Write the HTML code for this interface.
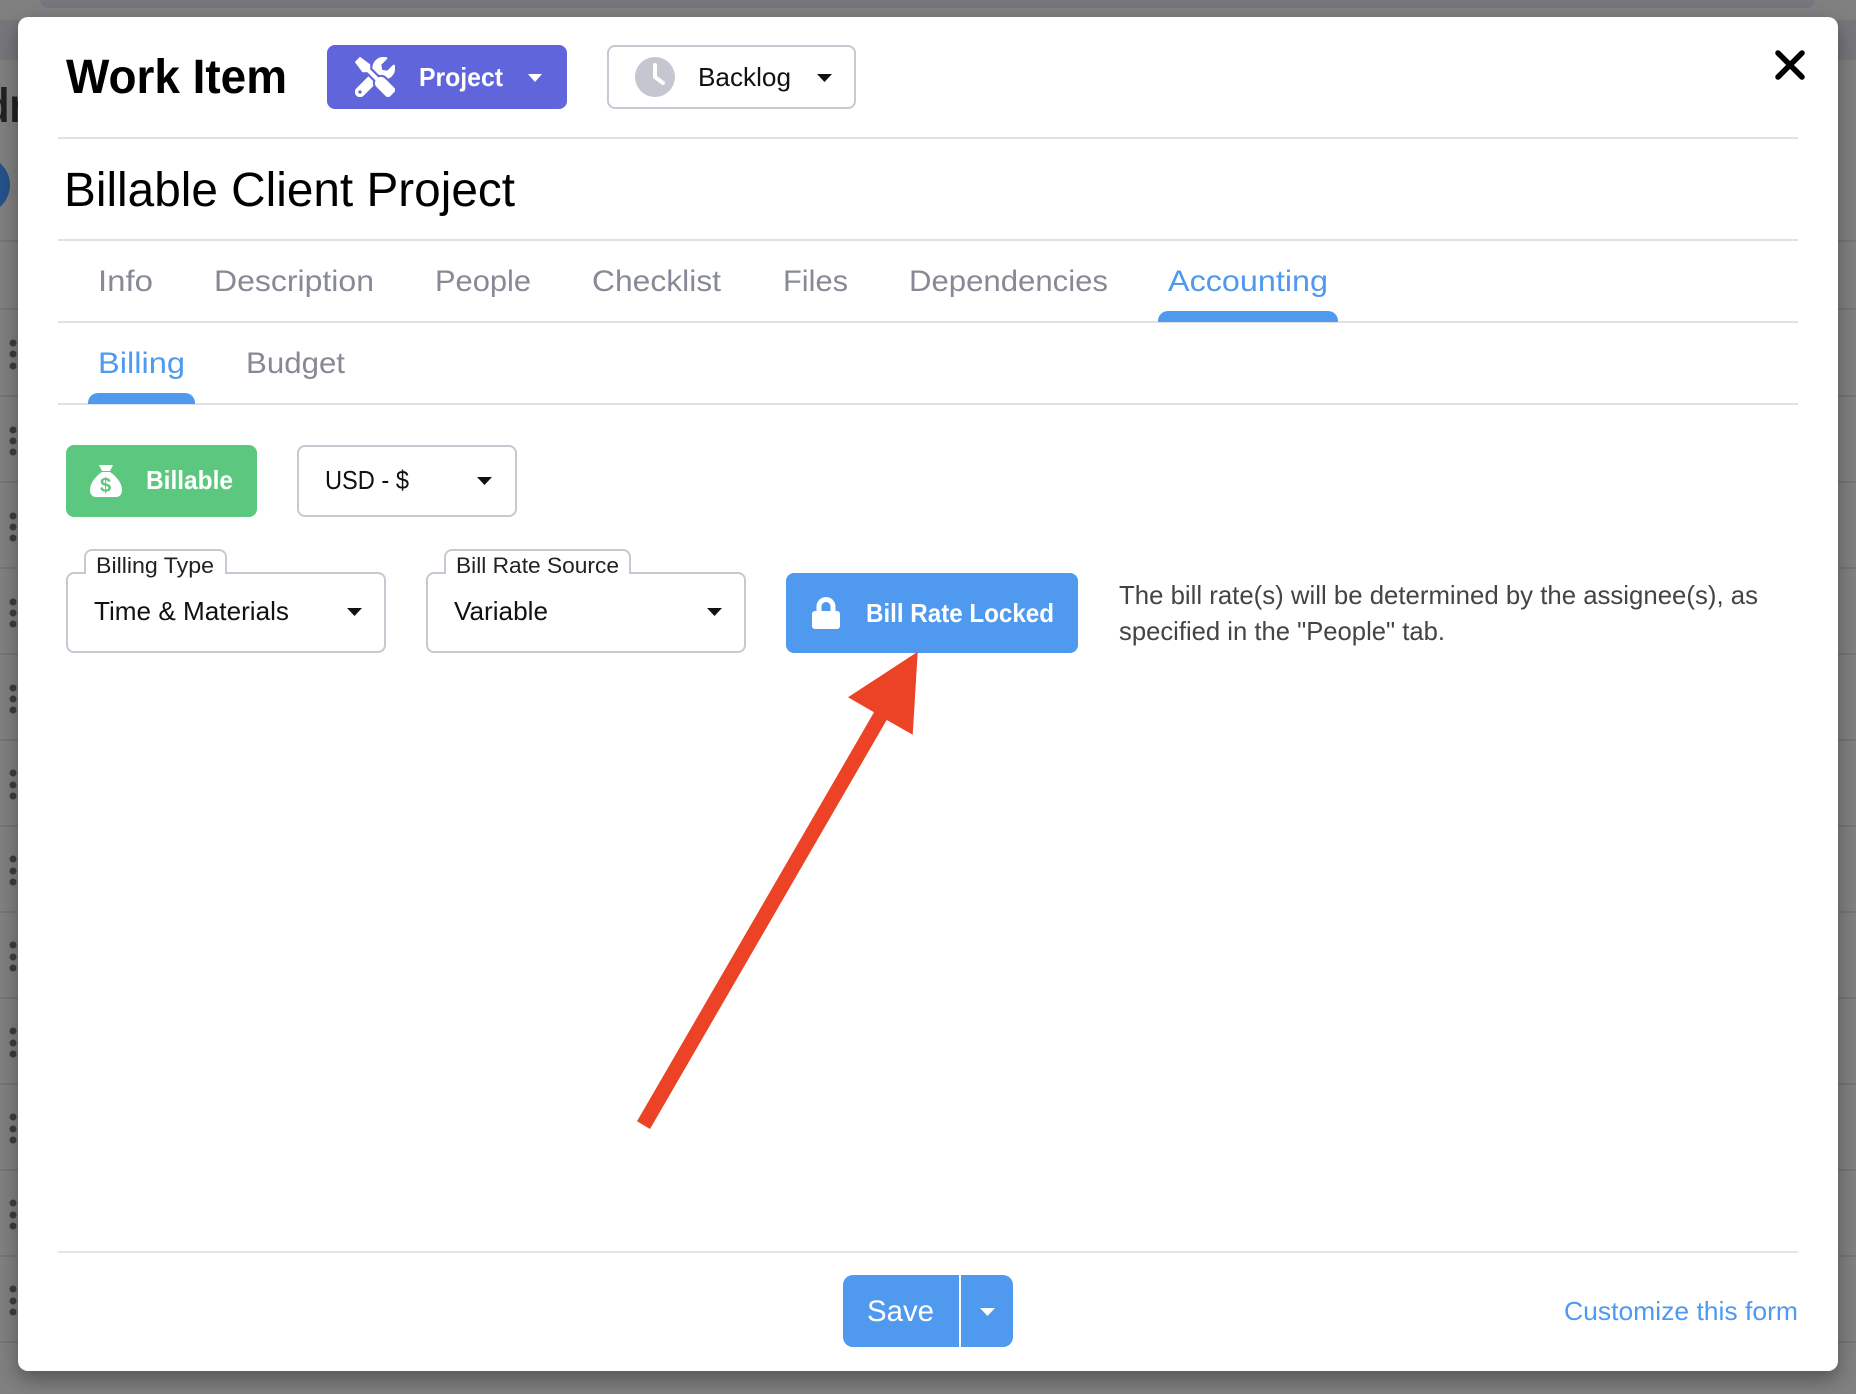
<!DOCTYPE html>
<html lang="en">
<head>
<meta charset="utf-8">
<title>Work Item</title>
<style>
html,body{margin:0;padding:0;width:1856px;height:1394px;overflow:hidden;background:#808080}
body{position:relative;font-family:"Liberation Sans",Arial,sans-serif}
div{position:absolute;box-sizing:border-box}
.bgl{left:0;width:1856px;height:2px;background:#74747a}
.ln{left:58px;width:1740px;height:2px;background:#dfe1e8}
.sel{background:#fff;border:2px solid #c8c8d2;border-radius:8px}
.btn{border-radius:8px}
.lab{background:#fff;border:2px solid #c8c8d2;border-bottom:0;border-radius:8px 8px 0 0}
.ind{background:#4f9aee;border-radius:10px 10px 0 0}
svg{position:absolute;left:0;top:0}
text{font-family:"Liberation Sans",Arial,sans-serif}
.tab{font-size:30px;fill:#878a96}
.tabA{font-size:30px;fill:#4f9aee}
.b{font-weight:bold;fill:#fff;font-size:26px}
.v{font-size:26px;fill:#111}
.l{font-size:22px;fill:#222}
.p{font-size:26px;fill:#444}
</style>
</head>
<body>
<!-- background page -->
<div style="left:40px;top:0;width:1775px;height:8px;background:#76767e;border-radius:0 0 12px 12px"></div>
<div style="left:0;top:20px;width:1856px;height:40px;background:#76767c"></div>
<div class="bgl" style="top:240px"></div>
<div class="bgl" style="top:308px"></div>
<div class="bgl" style="top:395px"></div>
<div class="bgl" style="top:481px"></div>
<div class="bgl" style="top:567px"></div>
<div class="bgl" style="top:653px"></div>
<div class="bgl" style="top:739px"></div>
<div class="bgl" style="top:825px"></div>
<div class="bgl" style="top:911px"></div>
<div class="bgl" style="top:997px"></div>
<div class="bgl" style="top:1083px"></div>
<div class="bgl" style="top:1169px"></div>
<div class="bgl" style="top:1255px"></div>
<div class="bgl" style="top:1341px"></div>
<div style="left:-48px;top:156px;width:58px;height:58px;border-radius:50%;background:#26528a"></div>
<svg width="1856" height="1394" viewBox="0 0 1856 1394">
  <text x="-15" y="122" font-size="48" font-weight="bold" fill="#222" textLength="40" lengthAdjust="spacingAndGlyphs">dr</text>
  <g fill="#3e3e3e">
    <circle cx="13" cy="343" r="3.5"/><circle cx="13" cy="354" r="3.5"/><circle cx="13" cy="366" r="3.5"/>
    <circle cx="13" cy="430" r="3.5"/><circle cx="13" cy="441" r="3.5"/><circle cx="13" cy="452" r="3.5"/>
    <circle cx="13" cy="516" r="3.5"/><circle cx="13" cy="527" r="3.5"/><circle cx="13" cy="538" r="3.5"/>
    <circle cx="13" cy="602" r="3.5"/><circle cx="13" cy="613" r="3.5"/><circle cx="13" cy="624" r="3.5"/>
    <circle cx="13" cy="688" r="3.5"/><circle cx="13" cy="699" r="3.5"/><circle cx="13" cy="710" r="3.5"/>
    <circle cx="13" cy="773" r="3.5"/><circle cx="13" cy="785" r="3.5"/><circle cx="13" cy="796" r="3.5"/>
    <circle cx="13" cy="859" r="3.5"/><circle cx="13" cy="871" r="3.5"/><circle cx="13" cy="882" r="3.5"/>
    <circle cx="13" cy="945" r="3.5"/><circle cx="13" cy="957" r="3.5"/><circle cx="13" cy="968" r="3.5"/>
    <circle cx="13" cy="1031" r="3.5"/><circle cx="13" cy="1043" r="3.5"/><circle cx="13" cy="1054" r="3.5"/>
    <circle cx="13" cy="1117" r="3.5"/><circle cx="13" cy="1129" r="3.5"/><circle cx="13" cy="1140" r="3.5"/>
    <circle cx="13" cy="1203" r="3.5"/><circle cx="13" cy="1215" r="3.5"/><circle cx="13" cy="1226" r="3.5"/>
    <circle cx="13" cy="1289" r="3.5"/><circle cx="13" cy="1301" r="3.5"/><circle cx="13" cy="1312" r="3.5"/>
  </g>
</svg>

<!-- modal -->
<div style="left:18px;top:17px;width:1820px;height:1354px;background:#fff;border-radius:10px;box-shadow:0 8px 20px rgba(0,0,0,.35)"></div>
<div class="ln" style="top:137px"></div>
<div class="ln" style="top:239px"></div>
<div class="ln" style="top:321px"></div>
<div class="ln" style="top:403px"></div>
<div class="ln" style="top:1251px;background:#e2e6ea"></div>

<div class="btn" style="left:327px;top:45px;width:240px;height:64px;background:#6065db"></div>
<div class="sel" style="left:607px;top:45px;width:249px;height:64px"></div>
<div class="ind" style="left:1158px;top:311px;width:180px;height:11px"></div>
<div class="ind" style="left:88px;top:393px;width:107px;height:11px"></div>

<div class="btn" style="left:66px;top:445px;width:191px;height:72px;background:#5cc87f"></div>
<div class="sel" style="left:297px;top:445px;width:220px;height:72px"></div>

<div class="sel" style="left:66px;top:572px;width:320px;height:81px"></div>
<div class="lab" style="left:84px;top:549px;width:143px;height:25px"></div>
<div class="sel" style="left:426px;top:572px;width:320px;height:81px"></div>
<div class="lab" style="left:444px;top:549px;width:187px;height:25px"></div>

<div class="btn" style="left:786px;top:573px;width:292px;height:80px;background:#4f9aee"></div>

<div style="left:843px;top:1275px;width:170px;height:72px;background:#4f9aee;border-radius:10px"></div>
<div style="left:959px;top:1275px;width:2px;height:72px;background:#fff"></div>

<svg width="1856" height="1394" viewBox="0 0 1856 1394">
  <text x="66" y="93" font-size="48" font-weight="bold" fill="#000" textLength="221" lengthAdjust="spacingAndGlyphs">Work Item</text>

  <svg x="355" y="57" width="40" height="40" viewBox="0 0 512 512"><path fill="#fff" stroke="#fff" stroke-width="6" stroke-linejoin="round" d="M501.1 395.7L384 278.6c-23.1-23.1-57.6-27.6-85.4-13.9L192 158.1V96L64 0 0 64l96 128h62.1l106.6 106.6c-13.6 27.8-9.2 62.3 13.9 85.4l117.1 117.1c14.6 14.6 38.2 14.6 52.7 0l52.7-52.7c14.5-14.6 14.5-38.2 0-52.7zM331.7 225c28.3 0 54.9 11 74.9 31l19.4 19.4c15.8-6.9 30.8-16.5 43.8-29.5 37.1-37.1 49.7-89.3 37.9-136.7-2.2-9-13.5-12.1-20.1-5.5l-74.4 74.4-67.9-11.3L334 98.9l74.4-74.4c6.6-6.6 3.4-17.9-5.7-20.2-47.4-11.7-99.6.9-136.6 37.9-28.5 28.5-41.9 66.1-41.2 103.6l82.1 82.1c8.1-1.9 16.5-2.9 24.7-2.9zm-103.9 82l-56.7-56.7L18.7 402.8c-25 25-25 65.5 0 90.5s65.5 25 90.5 0l123.6-123.6c-7.6-19.9-9.9-41.6-5-62.7zM64 472c-13.2 0-24-10.8-24-24 0-13.3 10.7-24 24-24s24 10.7 24 24c0 13.2-10.7 24-24 24z"/></svg>
  <text class="b" x="419" y="86" textLength="84" lengthAdjust="spacingAndGlyphs">Project</text>
  <polygon fill="#fff" points="528,74 542,74 535,82"/>

  <circle cx="655" cy="77" r="20" fill="#c5c6d0"/>
  <path d="M655 65V77L663 83" fill="none" stroke="#fff" stroke-width="4" stroke-linecap="round" stroke-linejoin="round"/>
  <text class="v" x="698" y="86" textLength="93" lengthAdjust="spacingAndGlyphs">Backlog</text>
  <polygon fill="#111" points="817,74 832,74 824.5,82"/>

  <path d="M1778 53L1802 77M1802 53L1778 77" stroke="#000" stroke-width="5.5" stroke-linecap="round" fill="none"/>

  <text x="64" y="206" font-size="48" fill="#000" textLength="451" lengthAdjust="spacingAndGlyphs">Billable Client Project</text>

  <text class="tab" x="98" y="291" textLength="55" lengthAdjust="spacingAndGlyphs">Info</text>
  <text class="tab" x="214" y="291" textLength="160" lengthAdjust="spacingAndGlyphs">Description</text>
  <text class="tab" x="435" y="291" textLength="96" lengthAdjust="spacingAndGlyphs">People</text>
  <text class="tab" x="592" y="291" textLength="129" lengthAdjust="spacingAndGlyphs">Checklist</text>
  <text class="tab" x="783" y="291" textLength="65" lengthAdjust="spacingAndGlyphs">Files</text>
  <text class="tab" x="909" y="291" textLength="199" lengthAdjust="spacingAndGlyphs">Dependencies</text>
  <text class="tabA" x="1168" y="291" textLength="160" lengthAdjust="spacingAndGlyphs">Accounting</text>

  <text class="tabA" x="98" y="373" textLength="87" lengthAdjust="spacingAndGlyphs">Billing</text>
  <text class="tab" x="246" y="373" textLength="99" lengthAdjust="spacingAndGlyphs">Budget</text>

  <path fill="#fff" d="M99 465H113L110 471H102Z"/>
  <path fill="#fff" d="M102 472H110C116 476 122 483 122 490C122 495 119 497 116 497H96C93 497 90 495 90 490C90 483 96 476 102 472Z"/>
  <text x="105.5" y="492" font-size="20" font-weight="bold" fill="#5cc87f" text-anchor="middle">$</text>
  <text class="b" x="146" y="489" textLength="87" lengthAdjust="spacingAndGlyphs">Billable</text>

  <text class="v" x="325" y="489" textLength="84" lengthAdjust="spacingAndGlyphs">USD - $</text>
  <polygon fill="#111" points="477,477 492,477 484.500,485"/>

  <text class="l" x="96" y="573" textLength="118" lengthAdjust="spacingAndGlyphs">Billing Type</text>
  <text class="l" x="456" y="573" textLength="163" lengthAdjust="spacingAndGlyphs">Bill Rate Source</text>
  <text class="v" x="94" y="620" textLength="195" lengthAdjust="spacingAndGlyphs">Time &amp; Materials</text>
  <polygon fill="#111" points="347,608 362,608 354.500,616"/>
  <text class="v" x="454" y="620" textLength="94" lengthAdjust="spacingAndGlyphs">Variable</text>
  <polygon fill="#111" points="707,608 722,608 714.500,616"/>

  <svg x="812" y="597" width="28" height="32" viewBox="0 0 448 512"><path fill="#fff" d="M400 224h-24v-72C376 68.200 307.800 0 224 0S72 68.200 72 152v72H48c-26.500 0-48 21.500-48 48v192c0 26.500 21.500 48 48 48h352c26.500 0 48-21.500 48-48V272c0-26.500-21.500-48-48-48zm-104 0H152v-72c0-39.700 32.300-72 72-72s72 32.300 72 72v72z"/></svg>
  <text class="b" x="866" y="622" textLength="188" lengthAdjust="spacingAndGlyphs">Bill Rate Locked</text>

  <text class="p" x="1119" y="604" textLength="639" lengthAdjust="spacingAndGlyphs">The bill rate(s) will be determined by the assignee(s), as</text>
  <text class="p" x="1119" y="640" textLength="326" lengthAdjust="spacingAndGlyphs">specified in the "People" tab.</text>

  <polygon fill="#ec4327" points="917.700,651.700 848,697.300 874,712.300 637,1121.300 650,1129 886.700,720 912.700,734.700"/>

  <text x="867" y="1321" font-size="30" fill="#fff" textLength="67" lengthAdjust="spacingAndGlyphs">Save</text>
  <polygon fill="#fff" points="980,1308 995,1308 987.500,1316"/>
  <text x="1564" y="1320" font-size="26" fill="#4f9aee" textLength="234" lengthAdjust="spacingAndGlyphs">Customize this form</text>
</svg>
</body>
</html>
